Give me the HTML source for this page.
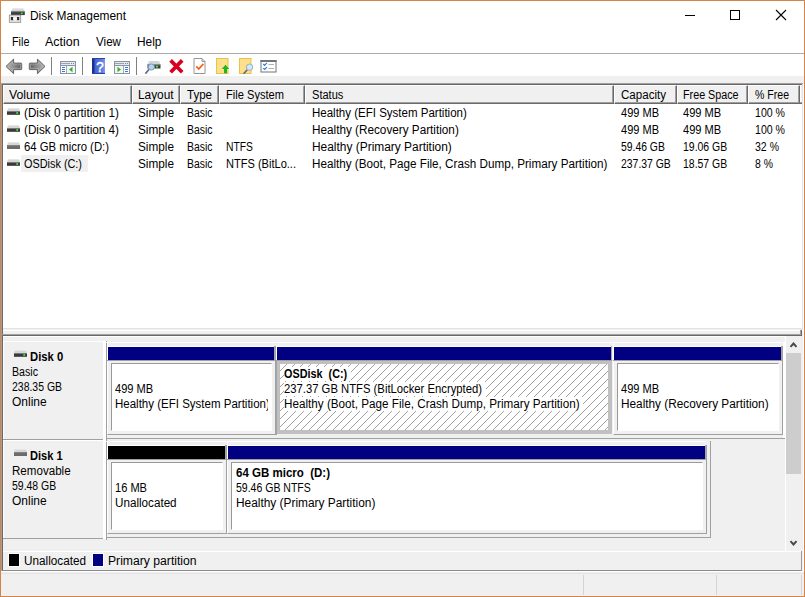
<!DOCTYPE html>
<html lang="en"><head><meta charset="utf-8"><title>Disk Management</title>
<style>
html,body{margin:0;padding:0;}
body{width:805px;height:597px;position:relative;overflow:hidden;background:#fff;
 font:12px/14px "Liberation Sans", sans-serif;color:#000;}
.a{position:absolute;}
.t{position:absolute;white-space:pre;transform-origin:0 0;line-height:14px;height:14px;font-size:12px;}
.b{font-weight:bold;}
.wbg{background:#fff;padding-right:4px;}
#win{position:absolute;left:0;top:0;width:803px;height:595px;border:1px solid #d48447;z-index:50;pointer-events:none;}
svg{position:absolute;overflow:visible;}
.hc{top:85px;height:19px;box-sizing:border-box;background:#f0f0f0;border-left:1px solid #fff;border-top:1px solid #fff;border-right:1px solid #696969;border-bottom:1px solid #696969;}
.hc::after{content:"";position:absolute;left:0;top:0;right:0;bottom:0;border-right:1px solid #a0a0a0;border-bottom:1px solid #a0a0a0;}

.dl{left:3px;width:100px;height:98px;box-sizing:border-box;background:#f0f0f0;border-top:1px solid #fff;border-left:1px solid #fff;box-shadow:0 1px 0 #a0a0a0;}
.pc{box-sizing:border-box;background:#f0f0f0;border-left:1px solid #fff;border-top:1px solid #fff;border-right:1px solid #a0a0a0;border-bottom:1px solid #a0a0a0;}
.pb{box-sizing:border-box;background:#fff;border:1px solid #fff;border-left-color:#999;border-top-color:#999;}

</style></head>
<body>
<!-- client background -->
<div class="a" style="left:1px;top:76px;width:803px;height:520px;background:#f0f0f0"></div>
<!-- menu underline -->
<div class="a" style="left:1px;top:53px;width:803px;height:1px;background:#ababab"></div>

<!-- window controls -->
<svg style="left:680px;top:5px" width="120" height="22" viewBox="0 0 120 22" shape-rendering="crispEdges">
 <rect x="5" y="10" width="10" height="1" fill="#000"/>
 <rect x="50.5" y="5.5" width="9" height="9" fill="none" stroke="#000" stroke-width="1"/>
 <g shape-rendering="geometricPrecision" stroke="#000" stroke-width="1.1"><path d="M96 5 L106 15 M106 5 L96 15" fill="none"/></g>
</svg>

<!-- list view frame -->
<div class="a" style="left:1px;top:83px;width:802px;height:1px;background:#a0a0a0"></div>
<div class="a" style="left:2px;top:84px;width:800px;height:1px;background:#696969"></div>
<div class="a" style="left:1px;top:83px;width:1px;height:488px;background:#a0a0a0"></div>
<div class="a" style="left:2px;top:84px;width:1px;height:487px;background:#696969"></div>
<div class="a" style="left:3px;top:85px;width:800px;height:243px;background:#fff"></div>
<!-- header -->

<div id="hdr"></div>
<div class="a hc" style="left:3px;width:129px"></div>
<div class="a hc" style="left:132px;width:48px"></div>
<div class="a hc" style="left:180px;width:39px"></div>
<div class="a hc" style="left:219px;width:86px"></div>
<div class="a hc" style="left:305px;width:309px"></div>
<div class="a hc" style="left:614px;width:63px"></div>
<div class="a hc" style="left:677px;width:71px"></div>
<div class="a hc" style="left:748px;width:52px"></div>
<div class="a" style="left:801px;top:86px;width:1px;height:16px;background:#f0f0f0"></div>
<div class="a" style="left:800px;top:102px;width:2px;height:1px;background:#a0a0a0"></div>
<div class="a" style="left:800px;top:103px;width:2px;height:1px;background:#696969"></div>
<div class="a" style="left:802px;top:84px;width:1px;height:246px;background:#e3e3e3"></div>
<div class="a" style="left:3px;top:328px;width:800px;height:1px;background:#e3e3e3"></div>
<!-- selected row -->
<div class="a" style="left:21px;top:155px;width:67px;height:17px;background:#f0f0f0"></div>

<!-- splitter -->
<div class="a" style="left:3px;top:330px;width:800px;height:1px;background:#fff"></div>
<div class="a" style="left:1px;top:334px;width:801px;height:1px;background:#a0a0a0"></div>
<div class="a" style="left:2px;top:335px;width:800px;height:1px;background:#696969"></div>


<!-- ===== bottom pane ===== -->
<svg width="0" height="0" style="left:0;top:0"><defs>
 <pattern id="hatch" x="0" y="0" width="8" height="8" patternUnits="userSpaceOnUse" shape-rendering="crispEdges">
  <rect x="2" y="0" width="1" height="1" fill="#a0a0a0"/><rect x="1" y="1" width="1" height="1" fill="#a0a0a0"/>
  <rect x="0" y="2" width="1" height="1" fill="#a0a0a0"/><rect x="7" y="3" width="1" height="1" fill="#a0a0a0"/>
  <rect x="6" y="4" width="1" height="1" fill="#a0a0a0"/><rect x="5" y="5" width="1" height="1" fill="#a0a0a0"/>
  <rect x="4" y="6" width="1" height="1" fill="#a0a0a0"/><rect x="3" y="7" width="1" height="1" fill="#a0a0a0"/>
 </pattern></defs></svg>

<!-- Disk 0 row -->
<div class="a dl" style="top:341px"></div>
<div class="a" style="left:103px;top:341px;width:3px;height:99px;background:#fff"></div>
<div class="a" style="left:106px;top:341px;width:1px;height:1px;background:#a0a0a0"></div>
<div class="a" style="left:106px;top:343px;width:1px;height:98px;background:#a0a0a0"></div>
<div class="a" style="left:107px;top:438px;width:679px;height:1px;background:#a0a0a0"></div>
<div class="a pc" style="left:107px;top:342px;width:169px;height:93px"></div>
<div class="a" style="left:107px;top:346px;width:167px;height:14px;background:#fff"></div>
<div class="a" style="left:108px;top:347px;width:166px;height:13px;background:#000080"></div>
<div class="a" style="left:107px;top:360px;width:169px;height:1px;background:#a0a0a0"></div>
<div class="a" style="left:274px;top:346px;width:2px;height:15px;background:#a4a4a4"></div>
<div class="a" style="left:275px;top:342px;width:1px;height:4px;background:#f0f0f0"></div>
<div class="a pb" style="left:111px;top:363px;width:161px;height:68px"></div>
<div class="a" style="left:276px;top:342px;width:336px;height:1px;background:#fff"></div>
<div class="a" style="left:276px;top:346px;width:336px;height:15px;background:#fff"></div>
<div class="a" style="left:277px;top:347px;width:334px;height:13px;background:#000080"></div>
<div class="a" style="left:277px;top:360px;width:335px;height:74px;background:#c0c0c0"></div>
<div class="a" style="left:275px;top:360px;width:337px;height:1px;background:#a0a0a0"></div>
<div class="a" style="left:276px;top:361px;width:1px;height:74px;background:#a4a4a4"></div>
<div class="a" style="left:611px;top:346px;width:1px;height:14px;background:#a8a8a8"></div>
<svg style="left:0;top:0" width="805" height="597"><rect x="280" y="364" width="328" height="66" fill="#fff"/><rect x="280" y="364" width="328" height="66" fill="url(#hatch)"/></svg>
<div class="a pc" style="left:613px;top:342px;width:170px;height:93px"></div>
<div class="a" style="left:613px;top:346px;width:168px;height:14px;background:#fff"></div>
<div class="a" style="left:614px;top:347px;width:167px;height:13px;background:#000080"></div>
<div class="a" style="left:613px;top:360px;width:170px;height:1px;background:#a0a0a0"></div>
<div class="a" style="left:781px;top:346px;width:2px;height:15px;background:#a4a4a4"></div>
<div class="a" style="left:782px;top:342px;width:1px;height:4px;background:#f0f0f0"></div>
<div class="a pb" style="left:617px;top:363px;width:162px;height:68px"></div>

<!-- Disk 1 row -->
<div class="a dl" style="top:440px"></div>
<div class="a" style="left:103px;top:440px;width:3px;height:99px;background:#fff"></div>
<div class="a" style="left:106px;top:440px;width:1px;height:1px;background:#a0a0a0"></div>
<div class="a" style="left:106px;top:442px;width:1px;height:98px;background:#a0a0a0"></div>
<div class="a" style="left:107px;top:537px;width:604px;height:1px;background:#a0a0a0"></div>
<div class="a pc" style="left:107px;top:441px;width:120px;height:93px"></div>
<div class="a" style="left:107px;top:445px;width:118px;height:14px;background:#fff"></div>
<div class="a" style="left:108px;top:446px;width:117px;height:13px;background:#000"></div>
<div class="a" style="left:107px;top:459px;width:120px;height:1px;background:#a0a0a0"></div>
<div class="a" style="left:225px;top:445px;width:2px;height:15px;background:#a4a4a4"></div>
<div class="a" style="left:226px;top:441px;width:1px;height:4px;background:#f0f0f0"></div>
<div class="a pb" style="left:111px;top:462px;width:112px;height:68px"></div>
<div class="a pc" style="left:227px;top:441px;width:480px;height:93px"></div>
<div class="a" style="left:227px;top:445px;width:478px;height:14px;background:#fff"></div>
<div class="a" style="left:228px;top:446px;width:477px;height:13px;background:#000080"></div>
<div class="a" style="left:227px;top:459px;width:480px;height:1px;background:#a0a0a0"></div>
<div class="a" style="left:705px;top:445px;width:2px;height:15px;background:#a4a4a4"></div>
<div class="a" style="left:706px;top:441px;width:1px;height:4px;background:#f0f0f0"></div>
<div class="a pb" style="left:231px;top:462px;width:472px;height:68px"></div>
<div class="a" style="left:710px;top:441px;width:1px;height:97px;background:#a0a0a0"></div>

<!-- vertical scrollbar -->
<div class="a" style="left:3px;top:336px;width:783px;height:1px;background:#fff"></div>
<div class="a" style="left:785px;top:336px;width:1px;height:215px;background:#fff"></div>
<div class="a" style="left:783px;top:342px;width:3px;height:96px;background:#fff"></div>
<div class="a" style="left:786px;top:336px;width:17px;height:215px;background:#f0f0f0"></div>
<div class="a" style="left:786px;top:353px;width:15px;height:121px;background:#cdcdcd"></div>
<svg style="left:786px;top:337px" width="17" height="214" viewBox="0 0 17 214"><path d="M4.5 9.9 L7.5 6.5 L10.5 9.9" fill="none" stroke="#484848" stroke-width="2"/><path d="M4.5 204.1 L7.5 207.5 L10.5 204.1" fill="none" stroke="#484848" stroke-width="2"/></svg>
<div class="a" style="left:800px;top:330px;width:1px;height:5px;background:#a0a0a0"></div>
<div class="a" style="left:801px;top:330px;width:1px;height:6px;background:#696969"></div>

<!-- legend -->
<div class="a" style="left:3px;top:551px;width:799px;height:1px;background:#fff"></div>
<div class="a" style="left:2px;top:570px;width:800px;height:1px;background:#8c8c8c"></div>
<div class="a" style="left:801px;top:551px;width:1px;height:20px;background:#999"></div>
<div class="a" style="left:803px;top:84px;width:1px;height:488px;background:#fff"></div>
<div class="a" style="left:1px;top:571px;width:803px;height:1px;background:#fff"></div>
<div class="a" style="left:8px;top:553px;width:12px;height:14px;background:#fff"></div>
<div class="a" style="left:9px;top:554px;width:10px;height:12px;background:#000"></div>
<div class="a" style="left:92px;top:553px;width:12px;height:14px;background:#fff"></div>
<div class="a" style="left:93px;top:554px;width:10px;height:12px;background:#000080"></div>

<!-- status bar -->
<div class="a" style="left:1px;top:573px;width:803px;height:1px;background:#e3e3e3"></div>
<div class="a" style="left:583px;top:575px;width:1px;height:20px;background:#d4d4d4"></div>
<div class="a" style="left:716px;top:575px;width:1px;height:20px;background:#d4d4d4"></div>
<div class="a" style="left:801px;top:575px;width:1px;height:20px;background:#d4d4d4"></div>


<!-- row icons -->
<svg style="left:6.5px;top:108px" width="13" height="7" viewBox="0 0 13 7"><path d="M1.2 0 H11.8 L13 3 H0 Z" fill="#d4d6d8"/><path d="M1.2 0 H11.8 L12.2 1 H0.8 Z" fill="#e4e6e8"/><rect x="0" y="3" width="13" height="4" fill="#3a3a3a"/><rect x="0" y="3" width="13" height="0.8" fill="#8a8a8a"/><rect x="0" y="6.3" width="13" height="0.7" fill="#6a6a6a"/><rect x="9.3" y="4.1" width="1.8" height="1.8" fill="#38e838"/></svg>
<svg style="left:6.5px;top:125px" width="13" height="7" viewBox="0 0 13 7"><path d="M1.2 0 H11.8 L13 3 H0 Z" fill="#d4d6d8"/><path d="M1.2 0 H11.8 L12.2 1 H0.8 Z" fill="#e4e6e8"/><rect x="0" y="3" width="13" height="4" fill="#3a3a3a"/><rect x="0" y="3" width="13" height="0.8" fill="#8a8a8a"/><rect x="0" y="6.3" width="13" height="0.7" fill="#6a6a6a"/><rect x="9.3" y="4.1" width="1.8" height="1.8" fill="#38e838"/></svg>
<svg style="left:6.5px;top:142px" width="13" height="7" viewBox="0 0 13 7"><path d="M1.2 0 H11.8 L13 3 H0 Z" fill="#d4d6d8"/><path d="M1.2 0 H11.8 L12.2 1 H0.8 Z" fill="#e4e6e8"/><rect x="0" y="3" width="13" height="4" fill="#6c6c6c"/><rect x="0" y="3" width="13" height="0.8" fill="#8a8a8a"/><rect x="0" y="6.3" width="13" height="0.7" fill="#6a6a6a"/></svg>
<svg style="left:6.5px;top:159px" width="13" height="7" viewBox="0 0 13 7"><path d="M1.2 0 H11.8 L13 3 H0 Z" fill="#d4d6d8"/><path d="M1.2 0 H11.8 L12.2 1 H0.8 Z" fill="#e4e6e8"/><rect x="0" y="3" width="13" height="4" fill="#3a3a3a"/><rect x="0" y="3" width="13" height="0.8" fill="#8a8a8a"/><rect x="0" y="6.3" width="13" height="0.7" fill="#6a6a6a"/><rect x="9.3" y="4.1" width="1.8" height="1.8" fill="#38e838"/></svg>
<svg style="left:14px;top:350px" width="13" height="7" viewBox="0 0 13 7"><path d="M1.2 0 H11.8 L13 3 H0 Z" fill="#d4d6d8"/><path d="M1.2 0 H11.8 L12.2 1 H0.8 Z" fill="#e4e6e8"/><rect x="0" y="3" width="13" height="4" fill="#3a3a3a"/><rect x="0" y="3" width="13" height="0.8" fill="#8a8a8a"/><rect x="0" y="6.3" width="13" height="0.7" fill="#6a6a6a"/><rect x="9.3" y="4.1" width="1.8" height="1.8" fill="#38e838"/></svg>
<svg style="left:14px;top:449px" width="13" height="7" viewBox="0 0 13 7"><path d="M1.2 0 H11.8 L13 3 H0 Z" fill="#d4d6d8"/><path d="M1.2 0 H11.8 L12.2 1 H0.8 Z" fill="#e4e6e8"/><rect x="0" y="3" width="13" height="4" fill="#6c6c6c"/><rect x="0" y="3" width="13" height="0.8" fill="#8a8a8a"/><rect x="0" y="6.3" width="13" height="0.7" fill="#6a6a6a"/></svg>
<svg style="left:8px;top:6px" width="18" height="18" viewBox="0 0 18 18">
 <defs><linearGradient id="tg" x1="0" y1="0" x2="0" y2="1"><stop offset="0" stop-color="#eceeef"/><stop offset="1" stop-color="#c4c8cc"/></linearGradient></defs>
 <path d="M4.6 2 H15.2 L16.8 5.5 H3 Z" fill="url(#tg)"/>
 <rect x="3" y="5.5" width="13.8" height="3.6" fill="#3c3c3c"/><rect x="3" y="5.5" width="13.8" height="0.7" fill="#777"/>
 <rect x="13" y="6.6" width="1.6" height="1.6" fill="#3cf03c"/>
 <rect x="1.3" y="9.1" width="11.4" height="7.2" fill="#e6e6e6" stroke="#8c8c8c" stroke-width="0.8"/>
 <rect x="2.9" y="11" width="2.3" height="3.2" fill="#2c2c2c"/><rect x="8.9" y="11" width="2.3" height="3.2" fill="#2c2c2c"/>
 <rect x="5.2" y="11.6" width="3.7" height="2" fill="#fafafa"/>
</svg>


<!-- toolbar icons -->
<svg style="left:0;top:54px" width="300" height="24" viewBox="0 54 300 24">
 <defs>
  <linearGradient id="agl" x1="0" y1="0" x2="1" y2="0"><stop offset="0" stop-color="#b8b8b8"/><stop offset="0.45" stop-color="#949494"/><stop offset="0.85" stop-color="#6c6c6c"/><stop offset="1" stop-color="#8c8c8c"/></linearGradient>
  <linearGradient id="agr" x1="1" y1="0" x2="0" y2="0"><stop offset="0" stop-color="#b8b8b8"/><stop offset="0.45" stop-color="#949494"/><stop offset="0.85" stop-color="#6c6c6c"/><stop offset="1" stop-color="#8c8c8c"/></linearGradient>
  <linearGradient id="hg" x1="0" y1="0" x2="1" y2="0"><stop offset="0" stop-color="#3a58c8"/><stop offset="1" stop-color="#6a88e6"/></linearGradient>
 </defs>
 <!-- back / forward -->
 <path d="M6 66.4 L13.6 59.1 V63.1 H21 Q21.7 63.1 21.7 63.8 V68.9 Q21.7 69.6 21 69.6 H13.6 V73.7 Z" fill="url(#agl)" stroke="#646464" stroke-width="1" stroke-linejoin="round"/>
 <path d="M7.6 66.4 L12.6 61.6 V64.1 H20.7 V68.6 H12.6 V71.2 Z" fill="none" stroke="#c2c2c2" stroke-width="0.6" stroke-opacity="0.8"/>
 <path d="M45 66.4 L37.4 59.1 V63.1 H30 Q29.3 63.1 29.3 63.8 V68.9 Q29.3 69.6 30 69.6 H37.4 V73.7 Z" fill="url(#agr)" stroke="#646464" stroke-width="1" stroke-linejoin="round"/>
 <path d="M43.4 66.4 L38.4 61.6 V64.1 H30.3 V68.6 H38.4 V71.2 Z" fill="none" stroke="#c2c2c2" stroke-width="0.6" stroke-opacity="0.8"/>
 <!-- separators -->
 <rect x="51" y="57" width="1" height="18" fill="#808080"/>
 <rect x="82" y="57" width="1" height="18" fill="#808080"/>
 <rect x="136" y="57" width="1" height="18" fill="#808080"/>
 <!-- show/hide console tree -->
 <g>
  <rect x="60.5" y="61.5" width="15" height="12" fill="#fff" stroke="#8a94a2"/>
  <rect x="61" y="62" width="14" height="3" fill="#e4e8ee"/>
  <rect x="61" y="63" width="9" height="1" fill="#9aa2ae"/><rect x="71" y="63" width="1" height="1" fill="#7a8290"/><rect x="73" y="63" width="1" height="1" fill="#7a8290"/>
  <rect x="61" y="65" width="14" height="1" fill="#8a94a2"/>
  <rect x="66" y="66" width="1" height="7" fill="#a0a8b4"/>
  <rect x="62" y="67" width="3" height="1" fill="#3878d8"/><rect x="62" y="69" width="3" height="1" fill="#3878d8"/><rect x="62" y="71" width="3" height="1" fill="#3878d8"/>
  <rect x="67" y="66" width="8" height="7" fill="#f4f6f4"/>
  <path d="M69 69.5 L72.5 66.7 V72.3 Z" fill="#2fb02f"/>
 </g>
 <!-- help -->
 <g>
  <rect x="92" y="58" width="13" height="16" fill="url(#hg)"/>
  <rect x="92" y="58" width="2.5" height="16" fill="#1c2f96"/><rect x="103.5" y="59" width="1.5" height="14" fill="#7c98ec"/>
  <rect x="92" y="58" width="13" height="1" fill="#2a44b4"/><rect x="92" y="73" width="13" height="1" fill="#2a3ea8"/>
  <text x="100" y="71.9" font-family="Liberation Sans, sans-serif" font-size="15.5" fill="#fff" stroke="#fff" stroke-width="0.5" text-anchor="middle" transform="translate(100 0) scale(0.86 1) translate(-100 0)">?</text>
 </g>
 <!-- action pane -->
 <g>
  <rect x="114.5" y="61.5" width="15" height="12" fill="#fff" stroke="#8a94a2"/>
  <rect x="115" y="62" width="14" height="3" fill="#e4e8ee"/>
  <rect x="115" y="63" width="9" height="1" fill="#9aa2ae"/><rect x="125" y="63" width="1" height="1" fill="#7a8290"/><rect x="127" y="63" width="1" height="1" fill="#7a8290"/>
  <rect x="115" y="65" width="14" height="1" fill="#8a94a2"/>
  <rect x="123" y="66" width="1" height="7" fill="#a0a8b4"/>
  <rect x="115" y="66" width="8" height="7" fill="#f4f6f4"/>
  <rect x="125" y="67" width="3" height="1" fill="#3878d8"/><rect x="125" y="69" width="3" height="1" fill="#3878d8"/><rect x="125" y="71" width="3" height="1" fill="#3878d8"/>
  <path d="M121 69.5 L117.5 66.7 V72.3 Z" fill="#2fb02f"/>
 </g>
 <!-- drive + magnifier -->
 <g>
  <path d="M149 61 H159 L160.5 64.5 H147.5 Z" fill="#d2d6da"/>
  <rect x="147.5" y="64.5" width="13" height="4" fill="#3c3c3c"/><rect x="147.5" y="64.5" width="13" height="0.8" fill="#808080"/>
  <rect x="156" y="65.7" width="2" height="1.8" fill="#3cf03c"/>
  <path d="M149.2 69.3 L145.4 73.6" stroke="#5c6c80" stroke-width="1.6" fill="none"/>
  <circle cx="151.4" cy="67" r="3.1" fill="#b4d4f0" stroke="#7c98b8" stroke-width="1"/>
 </g>
 <!-- red X -->
 <path d="M170.6 60.4 L182.2 72.2 M182.2 60.4 L170.6 72.2" stroke="#d8001e" stroke-width="3.7" fill="none"/>
 <!-- doc check -->
 <g>
  <path d="M194 58.5 H202 L205 61.5 V73.5 H194 Z" fill="#fff" stroke="#969696"/>
  <path d="M202 58.5 V61.5 H205" fill="none" stroke="#969696"/>
  <path d="M196.2 66.3 L198.8 68.9 L203.4 63.9" fill="none" stroke="#f0681e" stroke-width="1.7"/>
 </g>
 <!-- yellow doc + up arrow -->
 <g>
  <rect x="216.5" y="58.5" width="11.5" height="15" fill="#fde08c" stroke="#e8c24a"/>
  <path d="M225.5 64.8 L229.2 69 H227 V73.2 H224 V69 H221.8 Z" fill="#22b422"/>
 </g>
 <!-- yellow doc + magnifier -->
 <g>
  <rect x="239.5" y="58.5" width="11.5" height="15" fill="#fde08c" stroke="#e8c24a"/>
  <path d="M247.3 69.8 L243.6 73.8" stroke="#506484" stroke-width="1.5" fill="none"/>
  <circle cx="249.6" cy="67.2" r="3.2" fill="#d4e8f8" stroke="#94acc8" stroke-width="1"/>
 </g>
 <!-- checklist -->
 <g>
  <rect x="261" y="60.5" width="15" height="11.5" fill="#fff" stroke="#747474"/>
  <rect x="260.5" y="60" width="16" height="2" fill="#747474"/>
  <path d="M263.3 64 L264.6 65.3 L266.8 62.9" fill="none" stroke="#2c7ce0" stroke-width="1.2"/>
  <path d="M263.3 68.2 L264.6 69.5 L266.8 67.1" fill="none" stroke="#2c7ce0" stroke-width="1.2"/>
  <rect x="268.5" y="64" width="5.5" height="1" fill="#b0b0b0"/><rect x="268.5" y="68" width="5.5" height="1" fill="#b0b0b0"/>
 </g>
</svg>

<span class="t" style="left:30.0px;top:9.03px;transform:scaleX(0.9926);">Disk Management</span>
<span class="t" style="left:11.6px;top:35.03px;transform:scaleX(0.8995);">File</span>
<span class="t" style="left:45.2px;top:35.03px;transform:scaleX(1.0372);">Action</span>
<span class="t" style="left:96.0px;top:35.03px;transform:scaleX(0.9691);">View</span>
<span class="t" style="left:137.0px;top:35.03px;transform:scaleX(0.9924);">Help</span>
<span class="t" style="left:9.0px;top:88.03px;transform:scaleX(1.0242);">Volume</span>
<span class="t" style="left:138.0px;top:88.03px;transform:scaleX(0.9880);">Layout</span>
<span class="t" style="left:187.0px;top:88.03px;transform:scaleX(0.9610);">Type</span>
<span class="t" style="left:225.6px;top:88.03px;transform:scaleX(0.9252);">File System</span>
<span class="t" style="left:311.6px;top:88.03px;transform:scaleX(0.9227);">Status</span>
<span class="t" style="left:620.6px;top:88.03px;transform:scaleX(0.9639);">Capacity</span>
<span class="t" style="left:683.4px;top:88.03px;transform:scaleX(0.8961);">Free Space</span>
<span class="t" style="left:755.0px;top:88.03px;transform:scaleX(0.8788);">% Free</span>
<span class="t" style="left:23.6px;top:106.03px;transform:scaleX(0.9756);">(Disk 0 partition 1)</span>
<span class="t" style="left:138.0px;top:106.03px;transform:scaleX(0.9813);">Simple</span>
<span class="t" style="left:187.0px;top:106.03px;transform:scaleX(0.8656);">Basic</span>
<span class="t" style="left:311.6px;top:106.03px;transform:scaleX(0.9592);">Healthy (EFI System Partition)</span>
<span class="t" style="left:620.6px;top:106.03px;transform:scaleX(0.9188);">499 MB</span>
<span class="t" style="left:683.4px;top:106.03px;transform:scaleX(0.9236);">499 MB</span>
<span class="t" style="left:755.0px;top:106.03px;transform:scaleX(0.8815);">100 %</span>
<span class="t" style="left:23.6px;top:123.03px;transform:scaleX(0.9756);">(Disk 0 partition 4)</span>
<span class="t" style="left:138.0px;top:123.03px;transform:scaleX(0.9813);">Simple</span>
<span class="t" style="left:187.0px;top:123.03px;transform:scaleX(0.8656);">Basic</span>
<span class="t" style="left:311.6px;top:123.03px;transform:scaleX(0.9783);">Healthy (Recovery Partition)</span>
<span class="t" style="left:620.6px;top:123.03px;transform:scaleX(0.9188);">499 MB</span>
<span class="t" style="left:683.4px;top:123.03px;transform:scaleX(0.9236);">499 MB</span>
<span class="t" style="left:755.0px;top:123.03px;transform:scaleX(0.8815);">100 %</span>
<span class="t" style="left:23.6px;top:140.03px;transform:scaleX(0.9443);">64 GB micro (D:)</span>
<span class="t" style="left:138.0px;top:140.03px;transform:scaleX(0.9813);">Simple</span>
<span class="t" style="left:187.0px;top:140.03px;transform:scaleX(0.8656);">Basic</span>
<span class="t" style="left:225.6px;top:140.03px;transform:scaleX(0.8614);">NTFS</span>
<span class="t" style="left:311.6px;top:140.03px;transform:scaleX(0.9936);">Healthy (Primary Partition)</span>
<span class="t" style="left:620.6px;top:140.03px;transform:scaleX(0.8639);">59.46 GB</span>
<span class="t" style="left:683.4px;top:140.03px;transform:scaleX(0.8717);">19.06 GB</span>
<span class="t" style="left:755.0px;top:140.03px;transform:scaleX(0.8772);">32 %</span>
<span class="t" style="left:23.6px;top:157.03px;transform:scaleX(0.9062);">OSDisk (C:)</span>
<span class="t" style="left:138.0px;top:157.03px;transform:scaleX(0.9813);">Simple</span>
<span class="t" style="left:187.0px;top:157.03px;transform:scaleX(0.8656);">Basic</span>
<span class="t" style="left:225.6px;top:157.03px;transform:scaleX(0.9209);">NTFS (BitLo...</span>
<span class="t" style="left:311.6px;top:157.03px;transform:scaleX(0.9735);">Healthy (Boot, Page File, Crash Dump, Primary Partition)</span>
<span class="t" style="left:620.6px;top:157.03px;transform:scaleX(0.8680);">237.37 GB</span>
<span class="t" style="left:683.4px;top:157.03px;transform:scaleX(0.8717);">18.57 GB</span>
<span class="t" style="left:755.0px;top:157.03px;transform:scaleX(0.8701);">8 %</span>
<span class="t b" style="left:30.4px;top:350.03px;transform:scaleX(0.9389);">Disk 0</span>
<span class="t" style="left:12.4px;top:364.63px;transform:scaleX(0.8860);">Basic</span>
<span class="t" style="left:12.4px;top:379.63px;transform:scaleX(0.8715);">238.35 GB</span>
<span class="t" style="left:12.4px;top:394.63px;transform:scaleX(0.9975);">Online</span>
<span class="t b" style="left:30.4px;top:449.03px;transform:scaleX(0.9220);">Disk 1</span>
<span class="t" style="left:12.4px;top:463.63px;transform:scaleX(0.9654);">Removable</span>
<span class="t" style="left:12.4px;top:478.63px;transform:scaleX(0.8717);">59.48 GB</span>
<span class="t" style="left:12.4px;top:493.63px;transform:scaleX(0.9975);">Online</span>
<span class="t" style="left:115.4px;top:381.63px;transform:scaleX(0.9236);">499 MB</span>
<span class="t clip1" style="left:115.4px;top:396.63px;transform:scaleX(0.9592);">Healthy (EFI System Partition)</span>
<span class="t b wbg" style="left:284.4px;top:367.03px;transform:scaleX(0.9027);">OSDisk&nbsp; (C:)</span>
<span class="t wbg" style="left:284.4px;top:381.63px;transform:scaleX(0.9395);">237.37 GB NTFS (BitLocker Encrypted)</span>
<span class="t wbg" style="left:284.4px;top:396.63px;transform:scaleX(0.9741);">Healthy (Boot, Page File, Crash Dump, Primary Partition)</span>
<span class="t" style="left:621.0px;top:381.63px;transform:scaleX(0.9236);">499 MB</span>
<span class="t" style="left:621.0px;top:396.63px;transform:scaleX(0.9836);">Healthy (Recovery Partition)</span>
<span class="t" style="left:115.4px;top:480.63px;transform:scaleX(0.9225);">16 MB</span>
<span class="t" style="left:115.4px;top:495.63px;transform:scaleX(0.9720);">Unallocated</span>
<span class="t b" style="left:235.6px;top:465.83px;transform:scaleX(0.9590);">64 GB micro&nbsp; (D:)</span>
<span class="t" style="left:235.6px;top:480.63px;transform:scaleX(0.8761);">59.46 GB NTFS</span>
<span class="t" style="left:235.6px;top:495.63px;transform:scaleX(0.9907);">Healthy (Primary Partition)</span>
<span class="t" style="left:24.4px;top:553.53px;transform:scaleX(0.9783);">Unallocated</span>
<span class="t" style="left:108.4px;top:553.53px;transform:scaleX(1.0142);">Primary partition</span>
<div class="a" style="left:268px;top:395px;width:4px;height:17px;background:#fff"></div>
<div id="win"></div>

</body></html>
